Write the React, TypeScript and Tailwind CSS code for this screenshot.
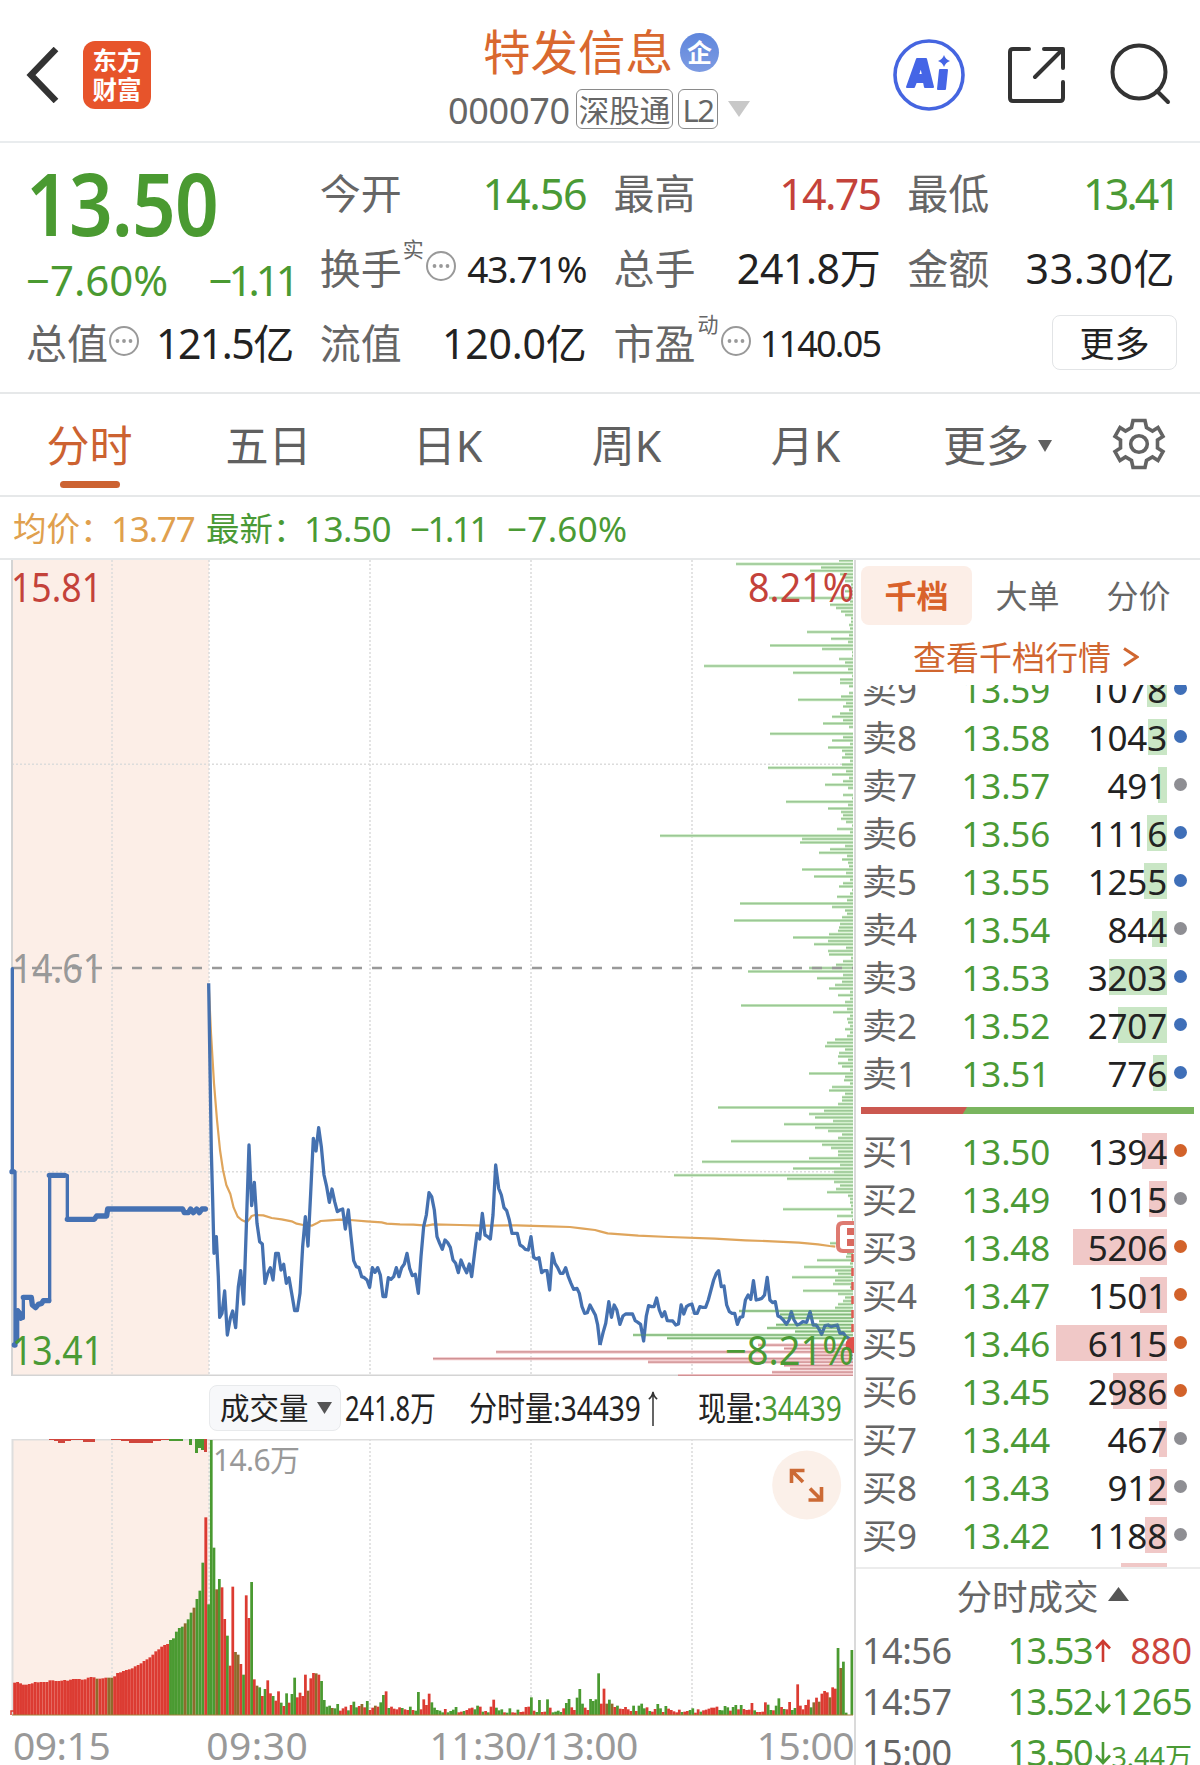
import clsx from 'clsx';

const quotes = [
  { label: '今开', value: '14.56', color: 'text-[#4a9a35] tracking-[-1.2px]' },
  { label: '最高', value: '14.75', color: 'text-[#c4423a] tracking-[-1.8px]' },
  { label: '最低', value: '13.41', color: 'text-[#4a9a35] tracking-[-3px] mr-[-4px]' },
];

const tabs = ['分时', '五日', '日K', '周K', '月K'];

const sells = [
  { name: '卖9', price: '13.59', qty: 1078, dot: 'bg-[#3f6fb8]' },
  { name: '卖8', price: '13.58', qty: 1043, dot: 'bg-[#3f6fb8]' },
  { name: '卖7', price: '13.57', qty: 491, dot: 'bg-[#8e8e93]' },
  { name: '卖6', price: '13.56', qty: 1116, dot: 'bg-[#3f6fb8]' },
  { name: '卖5', price: '13.55', qty: 1255, dot: 'bg-[#3f6fb8]' },
  { name: '卖4', price: '13.54', qty: 844, dot: 'bg-[#8e8e93]' },
  { name: '卖3', price: '13.53', qty: 3203, dot: 'bg-[#3f6fb8]' },
  { name: '卖2', price: '13.52', qty: 2707, dot: 'bg-[#3f6fb8]' },
  { name: '卖1', price: '13.51', qty: 776, dot: 'bg-[#3f6fb8]' },
];

const buys = [
  { name: '买1', price: '13.50', qty: 1394, dot: 'bg-[#d2622a]' },
  { name: '买2', price: '13.49', qty: 1015, dot: 'bg-[#8e8e93]' },
  { name: '买3', price: '13.48', qty: 5206, dot: 'bg-[#d2622a]' },
  { name: '买4', price: '13.47', qty: 1501, dot: 'bg-[#d2622a]' },
  { name: '买5', price: '13.46', qty: 6115, dot: 'bg-[#d2622a]' },
  { name: '买6', price: '13.45', qty: 2986, dot: 'bg-[#d2622a]' },
  { name: '买7', price: '13.44', qty: 467, dot: 'bg-[#8e8e93]' },
  { name: '买8', price: '13.43', qty: 912, dot: 'bg-[#8e8e93]' },
  { name: '买9', price: '13.42', qty: 1188, dot: 'bg-[#8e8e93]' },
];

const MAX_QTY = 6115;

// Order depth per price tick, from the upper limit down. Values are bar lengths in px.
const depthAsk = [
  14, 117, 32, 43, 13, 10, 8, 2, 3, 8, 2, 84, 3, 23, 17, 12, 8, 2, 2, 4, 3, 46, 4, 22, 5, 83, 31, 1, 1, 14,
  8, 149, 5, 60, 1, 13, 13, 4, 0, 4, 12, 55, 7, 10, 4, 13, 21, 10, 30, 4, 0, 83, 10, 21, 3, 25, 11, 8, 11, 3,
  11, 85, 7, 21, 4, 10, 28, 5, 0, 10, 1, 67, 5, 25, 12, 10, 12, 7, 1, 16, 3, 193, 51, 53, 8, 23, 34, 6, 11, 5,
  4, 51, 7, 39, 3, 10, 14, 1, 3, 16, 6, 113, 21, 8, 6, 11, 119, 13, 14, 15, 24, 60, 25, 39, 7, 25, 24, 2, 10, 17,
  44, 105, 10, 36, 11, 18, 24, 3, 15, 3, 8, 112, 6, 20, 3, 6, 5, 3, 8, 3, 6, 18, 26, 28, 8, 14, 15, 5, 15, 11,
  3, 44, 8, 9, 3, 21, 24, 8, 11, 11, 15, 135, 29, 44, 38, 20, 69, 38, 25, 11, 15, 122, 31, 22, 15, 15, 44, 151, 13, 60,
  19, 179, 66, 19, 13, 17, 26, 5, 3, 3, 2, 70, 2, 16, 1, 0, 0, 1, 0, 2, 1, 23, 8, 2, 6, 7, 36, 3, 49, 18,
  15, 61, 18, 20, 3, 50, 15, 8, 10, 15, 18, 114, 73, 71, 34, 77, 86, 58, 220, 186,
];
const depthBid = [95, 69, 357, 39, 420, 205, 69, 63, 81, 175];

const TICK = 3.396;
const depthPath = (list: number[], from: number) =>
  list.map((len, i) => (len ? `M${853 - len} ${(560.6 + (from + i) * TICK).toFixed(1)}H853` : '')).join('');

// Pre-market volume, then minute volume. Letter is the colour, number is the bar top on a 3x grid.
const auctionVol =
  'r908 r906 r910 r914 r914 r912 r910 r906 r907 r906 r906 r906 r901 r901 r903 r903 r902 r900 r902 r899 r897 r897 r897 r899 r898 r893 r891 r892 b896 r896 r895 r893 b893 b893 r889 r879 r877 r873 r870 r868 r865 r859 r855 r850 r843 r838 r832 r824 r814 r808 r800 r795 r792 g780 g775 g755 g744 g740 b730 g718 g698 b683 g657 g632 g548 r412'.split(' ');
const minuteVol = (
  'g673 g180 g503 b628 g597 r622 r717 g767 r857 r620 b816 b824 r852 g884 r646 r714 g606 r898 b917 g922 r948 g927 r901 r940 g948 r962 r934 g968 r978 g940 r968 g942 g893 r952 r938 r948 r884 b932 r895 r879 b880 r884 g903 g960 g980 g977 b984 g985 g972 r992 r985 r980 g991 r975 g965 g982 r978 b972 r982 g963 r990 r983 b977 r980 g967 g945 r934 g984 r980 r986 r988 r982 g984 r988 r990 g980 r990 g992 g936 r988 r958 r975 r941 g967 g983 g990 g992 g997 r987 g997 g993 ' +
  'g989 g981 r997 r995 g993 r990 r985 r983 g988 g977 r980 g995 r993 g997 r980 r959 g983 g991 g988 r997 g998 g985 r997 r998 g989 r996 r995 r981 r980 g952 r992 g996 g960 r996 r995 g958 r983 g997 g995 g992 g996 r985 g969 g957 r982 r990 g953 g927 g971 r983 r990 g957 g963 g958 g880 r971 r926 b971 g959 b971 r981 g977 r986 r987 r981 r988 r993 g977 r993 g977 g971 g985 r982 g993 r995 r987 g972 g985 r996 g978 r986 r990 r994 r997 r989 g996 r995 r993 g990 g985 r998 r988 g995 r991 r989 r986 r983 r983 r980 g990 g991 g978 g982 r992 g981 g975 r988 g975 r987 r990 r989 r969 g991 r996 r996 r995 r967 g974 g990 r991 g977 g955 r981 g987 r988 r966 g990 g984 r913 r977 r988 r975 r959 g982 b967 r953 b965 r941 r933 r937 b952 r922 r926 g804 b864 g845 g998'
).split(' ');

const volColor: Record<string, string> = { r: '#dc3b32', g: '#4a9a31', b: '#8f6a2c' };

const Caret = ({ className, up }: { className: string; up?: boolean }) => (
  <svg viewBox="0 0 20 14" preserveAspectRatio="none" className={className} fill="currentColor">
    <path d={up ? 'M10 0L20 14H0z' : 'M0 0H20L10 14z'} />
  </svg>
);

const Dots = () => (
  <svg viewBox="0 0 30 30" className="h-[30px] w-[30px] shrink-0" fill="none" stroke="#999" strokeWidth="2">
    <circle cx="15" cy="15" r="14" />
    <g fill="#999" stroke="none">
      <circle cx="8.5" cy="15" r="1.9" />
      <circle cx="15" cy="15" r="1.9" />
      <circle cx="21.5" cy="15" r="1.9" />
    </g>
  </svg>
);

function Header() {
  return (
    <header className="relative flex h-[143px] items-center justify-between border-b-2 border-[#e9ecee]">
      <div className="flex items-center pt-[9px] pl-[26px]">
        <svg viewBox="0 0 34 56" className="h-14 w-[34px]" fill="none" stroke="#333" strokeWidth="6.5">
          <path d="M30 2L5 28L30 54" />
        </svg>
        <div className="ml-[23px] flex h-[68px] w-[68px] flex-col items-center justify-center rounded-xl bg-[#e7542b] text-[24.500px] leading-[29px] font-bold text-white">
          <span>东方</span>
          <span>财富</span>
        </div>
      </div>
      <div className="absolute top-5 left-[448px] flex flex-col">
        <div className="flex h-[64px] items-center pl-[35px]">
          <span className="text-[47.500px] leading-none text-[#d9682f]">特发信息</span>
          <span className="ml-[7px] flex h-[39px] w-[39px] items-center justify-center rounded-full bg-linear-to-b from-[#5f86dc] to-[#7d9be2] text-[25px] leading-none font-bold text-white">
            企
          </span>
        </div>
        <div className="flex h-[50px] items-center text-[#666]">
          <span className="w-[128px] pt-[3px] text-[36px] leading-none tracking-[-0.3px]">000070</span>
          <span className="flex h-10 w-[97px] items-center justify-center rounded-md border-[1.5px] border-[#8a8a8a] pt-0.5 text-[30.500px] leading-none">深股通</span>
          <span className="ml-[5px] flex h-10 w-10 items-center justify-center rounded-md border-[1.5px] border-[#8a8a8a] pt-0.5 text-[31px] leading-none tracking-tighter">L2</span>
          <Caret className="ml-[10px] h-[16px] w-[22px] text-[#c8c8c8]" />
        </div>
      </div>
      <div className="flex items-center pt-[9px] pr-[28px]">
        <svg viewBox="0 0 72 72" className="h-[72px] w-[72px]">
          <circle cx="36" cy="36" r="34" fill="none" stroke="#4565e0" strokeWidth="3.6" />
          <path fill="#4565e6" stroke="#4565e6" strokeWidth="2" strokeLinejoin="round" d="M14 48L24 20h9l7 28h-8l-1-5h-8l-2 5zM25 36h5l-2-9zM47 31h7l-2 19h-7z" />
          <path fill="#4565e6" d="M51 16q1.500 4.500 6 6q-4.500 1.500-6 6q-1.500-4.500-6-6q4.500-1.500 6-6z" />
        </svg>
        <svg viewBox="0 0 60 60" className="ml-[42px] h-[60px] w-[60px]" fill="none" stroke="#333" strokeWidth="4" strokeLinecap="round" strokeLinejoin="round">
          <path d="M22 4H6q-3 0-3 3V53q0 3 3 3H53q3 0 3-3V37M37 4H56V23M55 5L28 32" />
        </svg>
        <svg viewBox="0 0 62 62" className="-mt-[2px] ml-[43px] h-[62px] w-[62px]" fill="none" stroke="#333" strokeWidth="4" strokeLinecap="round">
          <circle cx="29" cy="29" r="26.500" />
          <path d="M47 48L58 59" />
        </svg>
      </div>
    </header>
  );
}

function Stats() {
  return (
    <section className="h-[249px] px-[26px] pt-[13px] text-[41px] leading-none text-[#666]">
      <div className="grid grid-cols-4 gap-x-[27px]">
        <div className="row-span-2 flex h-[150px] flex-col text-[#4a9a31]">
          <span className="origin-left scale-x-[0.89] pt-[3px] text-[86px] leading-[88px] font-semibold tracking-[-1px]">13.50</span>
          <div className="mt-[12px] flex justify-between text-[42px]">
            <span>−7.60%</span>
            <span className="-mr-[3px] tracking-[-4px]">−1.11</span>
          </div>
        </div>
        {quotes.map((q) => (
          <div key={q.label} className="flex h-[75px] items-center justify-between">
            <span>{q.label}</span>
            <span className={clsx('text-[43px]', q.color)}>{q.value}</span>
          </div>
        ))}
        <div className="flex h-[75px] items-center">
          <span>换手</span>
          <span className="ml-[1px] self-start pt-[8px] text-[21px]">实</span>
          <span className="ml-[2px] -mt-[6px]"><Dots /></span>
          <span className="ml-auto text-[37px] tracking-[-1px] text-[#222]">43.71%</span>
        </div>
        <div className="flex h-[75px] items-center justify-between">
          <span>总手</span>
          <span className="tracking-[-0.4px] text-[#222]">241.8万</span>
        </div>
        <div className="flex h-[75px] items-center justify-between">
          <span>金额</span>
          <span className="-mr-px tracking-[0.6px] text-[#222]">33.30亿</span>
        </div>
        <div className="flex h-[75px] items-center">
          <span>总值</span>
          <span className="ml-[1px] -mt-[6px]"><Dots /></span>
          <span className="ml-auto tracking-[-1.500px] text-[#222]">121.5亿</span>
        </div>
        <div className="flex h-[75px] items-center justify-between">
          <span>流值</span>
          <span className="tracking-[-0.2px] text-[#222]">120.0亿</span>
        </div>
        <div className="flex h-[75px] items-center">
          <span>市盈</span>
          <span className="ml-[2px] self-start pt-[8px] text-[21px]">动</span>
          <span className="ml-[2px] -mt-[6px]"><Dots /></span>
          <span className="ml-auto text-[36px] tracking-[-1.800px] text-[#222]">1140.05</span>
        </div>
        <div className="flex h-[75px] items-center justify-end">
          <span className="-mr-[3px] -mt-[2px] flex h-[55px] w-[125px] items-center justify-center rounded-lg border-[1.5px] border-[#e2e4e6] pt-0.5 text-[35px] text-[#222]">更多</span>
        </div>
      </div>
    </section>
  );
}

function Tabs() {
  return (
    <nav className="flex h-[105px] border-y-2 border-[#e6e8e9] text-[43px] leading-none text-[#606060]">
      {tabs.map((t, i) => (
        <div key={t} className={clsx('relative flex w-[179px] items-center justify-center pt-0.5', i === 0 && 'text-[#cc6231]')}>
          {t}
          {i === 0 && <span className="absolute bottom-[7px] h-[7px] w-[60px] rounded-full bg-[#cc6231]" />}
        </div>
      ))}
      <div className="flex w-[205px] items-center justify-center pt-0.5">
        更多
        <Caret className="ml-[9px] h-3 w-[14px]" />
      </div>
      <svg viewBox="-27 -27 54 54" className="mt-[23px] ml-[12px] h-[54px] w-[54px]" fill="none" stroke="#636363" strokeWidth="3.600">
        <path d="M-6-23.500H6L7.500-16.500L13.500-12.900L19-16.500L24-7.500L18.500-4V4L24 7.500L19 16.500L13.500 12.900L7.500 16.500L6 23.500H-6L-7.500 16.500L-13.500 12.900L-19 16.500L-24 7.500L-18.500 4V-4L-24-7.500L-19-16.500L-13.500-12.900L-7.500-16.500z" />
        <circle r="8.300" />
      </svg>
    </nav>
  );
}

function PriceChart() {
  const grid = { stroke: '#dcdcdc', strokeWidth: 1.6, strokeDasharray: '2 2' };
  return (
    <svg viewBox="0 560 854 816" className="block h-[816px] w-[854px]" fill="none">
      <rect x="12" y="560" width="197" height="815" fill="#fceee7" />
      <path d="M112 560V1375M209 560V1375M370 560V1375M531 560V1375M692 560V1375M12 764.300H853M12 1171.700H853" {...grid} />
      <path d="M12 560V1375.500H853" stroke="#d4d4d4" strokeWidth="2" />

      <path d={depthPath(depthAsk, 0)} stroke="#c8eac0" strokeWidth="3" />
      <path d={depthPath(depthAsk, 0)} stroke="#9cc796" strokeWidth="1.500" />
      <path d={depthPath(depthBid, 231)} stroke="#efc0c2" strokeWidth="3" />
      <path d={depthPath(depthBid, 231)} stroke="#cf9295" strokeWidth="1.200" />

      <path d="M12 968H853" stroke="#999" strokeWidth="2.600" strokeDasharray="10 10" />

      {/* average price */}
      <g stroke="#dfa55c" strokeWidth="2.200" strokeLinejoin="round">
        <path
          transform="translate(200 940) scale(.33333)"
          vectorEffect="non-scaling-stroke"
          d="M26 132L33 280L42 430L51 540L60 630L69 690L79 735L91 762L101 803L113 830L125 840L140 847L148 838L155 828L165 825L190 826L215 834L245 838L275 844L290 851L310 855L335 857L350 850L362 843L390 841L420 839L450 840L500 844L545 847L560 851L600 853L640 854L680 857L700 853L780 855L850 857L950 856L1050 859L1110 861L1150 866L1185 870L1200 874L1223 880L1315 887L1407 891L1544 896L1636 901L1717 904L1797 908L1854 913L1889 918L1906 920"
        />
      </g>

      {/* call auction */}
      <g transform="translate(0 940) scale(.33333)" stroke="#4571b3" strokeLinejoin="round" strokeLinecap="round">
        <path
          strokeWidth="10"
          d="M37 86V695H45V1215M53 1205V1110L62 1118V1135H70V1072H94L97 1095L107 1103L115 1093L125 1090L130 1083H149V706H202V838H285L290 828H320L323 807H548L553 818H565L572 807L580 818L590 807L598 818L606 807H618"
        />
        <path
          strokeWidth="16"
          d="M36 695H40M43 1215H45M53 1112L62 1135M70 1072H94L97 1095L107 1103L115 1093L125 1090L130 1082H146M148 706H194M202 838H283L290 828H320L323 807H548L553 818H565L572 807L580 818L590 807L598 818L606 807H616"
        />
      </g>

      {/* last price */}
      <g stroke="#4571b0" strokeWidth="3.300" strokeLinejoin="round">
        <path
          transform="translate(200 940) scale(.33333)"
          vectorEffect="non-scaling-stroke"
          d="M26 130L34 635L38 780L42 940L49 890L55 1010L59 1132L66 1120L74 1053L82 1185L91 1135L98 1113L107 1163L115 1040L122 992L131 1092L139 860L147 615L155 797L163 727L171 850L179 905L187 912L195 1030L203 1000L211 983L219 1020L227 940H235L243 990L251 973L259 1030L267 1013L275 1060L284 1112H292L300 1060L308 920L316 830L324 918L332 760L340 595L348 633L356 563L364 620L372 705L380 740L388 787L396 747L404 785L412 815L420 810L428 807L436 867L445 810L453 890L461 962L469 980L477 983L485 1010L493 1013L501 1020L509 1042L517 983L525 997L533 983L541 1005L549 1070H557L565 1013L573 1018L581 1010L589 983L597 1010L605 983L613 972L621 940L629 985L637 1007L646 1003L655 1060L663 950L671 860L679 825L687 758L695 770L703 810L711 890L719 910L727 928L735 900L743 908L751 922L759 960L767 970L775 998L783 960L791 980L800 998L808 972L815 1010L823 945L831 880L839 897L847 820L855 885L863 890L871 897L879 825L887 675L896 745L904 765L912 803L920 812L928 840L936 880H952L960 915L968 920L976 928L985 930L993 890L1001 952L1009 957L1017 953L1025 998L1033 992H1041L1049 1050L1057 940L1065 970L1073 983L1081 1000H1089L1097 983L1105 1010L1113 1030L1121 1048L1131 1045L1138 1060L1146 1100L1154 1120L1162 1118L1170 1095L1178 1110L1186 1125L1193 1155L1200 1215"
        />
        <path
          transform="translate(600 940) scale(.3827 .33333)"
          vectorEffect="non-scaling-stroke"
          d="M0 1215L8 1178L15 1150L23 1085L30 1132L37 1095L44 1110L52 1153L60 1128L67 1122H85L92 1142L99 1147L106 1153L114 1203L121 1128L127 1097L135 1100H141L148 1074L155 1110L162 1130L169 1115L176 1142L190 1143L198 1155L205 1152L212 1095L219 1122L226 1100L232 1095L240 1092L247 1120H254L261 1100L268 1102H276L283 1080L290 1050L297 1020L304 1000L310 992L317 1040L324 1038L331 1095L338 1115L345 1120H352L359 1153L366 1132L373 1130L380 1080L387 1065L394 1078L401 1022L408 1080L415 1078L423 1075L430 1065L437 1012L444 1080L451 1088L458 1085L465 1128L472 1132L479 1140L487 1153L494 1140L500 1115L507 1140L515 1155L522 1152L530 1145L540 1147L549 1115L557 1155H565L571 1165L579 1183L588 1157L596 1155L604 1160L612 1157L620 1155L627 1180L635 1178L643 1190L650 1195L657 1203"
        />
      </g>
      <path d={depthPath(depthAsk.slice(221), 221)} stroke="#5aa050" strokeOpacity=".35" strokeWidth="1.500" />

      {/* marker badge cut off by the chart edge */}
      <path d="M854 1223H843q-5 0-5 5v18q0 5 5 5h11" fill="#fff" stroke="#de7a70" strokeWidth="4" />
      <path d="M847 1228h7v7h-7zM847 1239h7v7h-7z" fill="#d9695f" />
      <path d="M852.500 1254V1345" stroke="#de5a50" strokeWidth="2.500" strokeDasharray="8 6" />
      <path d="M853.500 1338a7 7 0 0 0 0 14z" fill="#e0504a" stroke="#e0504a" strokeWidth="2" />

      <g className="font-['Noto_Sans','Noto_Sans_CJK_SC',sans-serif] text-[39.500px]">
        <text x="11" y="602" textLength="91" lengthAdjust="spacingAndGlyphs" fill="#c4423a">15.81</text>
        <text x="12" y="983" textLength="91" lengthAdjust="spacingAndGlyphs" fill="#999">14.61</text>
        <text x="12" y="1365" textLength="91" lengthAdjust="spacingAndGlyphs" fill="#4a9a35">13.41</text>
        <text x="748" y="602" textLength="106" lengthAdjust="spacingAndGlyphs" fill="#c4423a">8.21%</text>
        <text x="725" y="1365" textLength="129" lengthAdjust="spacingAndGlyphs" fill="#4a9a35">−8.21%</text>
      </g>
    </svg>
  );
}

function VolumeBar() {
  return (
    <div className="flex h-[63px] items-center text-[34px] leading-none whitespace-nowrap text-[#222]">
      <div className="ml-[209px] flex h-[46px] w-[132px] shrink-0 items-center rounded-lg border border-[#e8eaec] bg-[#f7f8fa] pl-[10px]">
        <span className="w-[90px] text-[29.500px]">成交量</span>
        <Caret className="ml-[7px] h-[12px] w-[15px] text-[#555]" />
      </div>
      <span className="ml-1 w-[124px] shrink-0 origin-left scale-x-[0.75]">241.8万</span>
      <span className="w-[179px] shrink-0 origin-left scale-x-[0.825]">分时量:34439</span>
      <svg viewBox="0 0 10 36" className="h-9 w-[10px] shrink-0" fill="none" stroke="#333" strokeWidth="1.500">
        <path d="M5 36V2M0.800 9Q4 7 5 2Q6 7 9.200 9" />
      </svg>
      <span className="ml-[40px] shrink-0 origin-left scale-x-[0.825]">
        现量:<span className="text-[#4a9a35]">34439</span>
      </span>
    </div>
  );
}

function VolumeChart() {
  return (
    <svg viewBox="0 1439 854 277" className="block h-[277px] w-[854px]" fill="none">
      <rect x="12" y="1439" width="197" height="276" fill="#fceee7" />
      <path d="M112 1439V1715M209 1439V1715M370 1439V1715M531 1439V1715M692 1439V1715" stroke="#dcdcdc" strokeWidth="1.600" strokeDasharray="2 2" />
      <path d="M12.500 1715V1439.500H853" stroke="#dedede" strokeWidth="2" />
      {auctionVol.map((v, i) => (
        <rect key={i} x={13.2 + i * 2.941} y={1380 + Number(v.slice(1)) / 3} width="2.9" height={(1005 - Number(v.slice(1))) / 3} fill={volColor[v[0]]} />
      ))}
      <path d="M11 1715v-4h3" stroke="#dc3b32" strokeWidth="1.500" />
      {minuteVol.map((v, i) => (
        <rect key={i} x={207.2 + i * 2.69} y={1380 + Number(v.slice(1)) / 3} width="2.75" height={(1005 - Number(v.slice(1))) / 3} fill={volColor[v[0]]} />
      ))}
      <rect x="850.500" y="1650" width="2.700" height="65" fill="#4a9a31" />
      <path d="M12 1715H853" stroke="#a08038" strokeWidth="1" />

      {/* unmatched volume hanging from the top */}
      <path fill="#d0453c" d="M12 1439h37v1h5v1h4v2h7v-2h6v-1h12v2h12v-3h16v1h10v1h8v2h24v-2h8v-1h8v-1zM204 1439h3v13h-3z" />
      <path fill="#4a9a31" d="M169 1439h14v2h-14zM189 1439h3v6h-3zM195 1439h3v14h-3zM198 1439h3v9h-3zM201 1439h3v11h-3z" />

      <text x="213" y="1471" textLength="87" fill="#999" className="font-['Noto_Sans','Noto_Sans_CJK_SC',sans-serif] text-[30px]">
        14.6万
      </text>
      <circle cx="806.700" cy="1485" r="34.500" fill="#fbf0e9" />
      <path d="M791.500 1483V1470.500H804.500M792 1471L803 1482M821.500 1487V1500H808.500M821 1499.500L810 1488.500" stroke="#cc6a35" strokeWidth="3.600" />
    </svg>
  );
}

function BookRow({ name, price, qty, dot, sell }: { name: string; price: string; qty: number; dot: string; sell?: boolean }) {
  return (
    <div className="flex h-12 shrink-0 items-center pl-[6px] text-[35px] leading-none">
      <span className="w-[62px] text-[#666]">{name}</span>
      <span className="w-[126px] text-right tracking-[-0.2px] text-[#4a9a35]">{price}</span>
      <div className="relative ml-[6px] flex h-9 w-[111px] items-center justify-end">
        <span
          className={clsx('absolute inset-y-0 right-0', sell ? 'bg-[#c9e6c5]' : 'bg-[#f0c8c7]')}
          style={{ width: `${(qty / MAX_QTY) * 100}%` }}
        />
        <span className="relative tracking-[-0.2px] text-[#222]">{qty}</span>
      </div>
      <span className={clsx('mb-[2px] ml-[7px] h-[13px] w-[13px] rounded-full', dot)} />
    </div>
  );
}

function TradeArrow({ down }: { down?: boolean }) {
  return (
    <svg viewBox="0 0 16 24" className={clsx('h-6 w-4 shrink-0', down ? 'text-[#4a9a35]' : 'text-[#cc3a30]')} fill="none" stroke="currentColor" strokeWidth="2.600">
      <path d={down ? 'M8 1V22M1 14.500L8 22L15 14.500' : 'M8 23V2M1 9.500L8 2L15 9.500'} />
    </svg>
  );
}

function OrderBook() {
  return (
    <aside className="flex h-[1205px] w-[346px] flex-col overflow-hidden border-l-2 border-[#dadada]">
      <div className="flex shrink-0 pt-[6px] pl-[5px] text-[32px] leading-none text-[#666]">
        <span className="flex h-[59px] w-[111px] items-center justify-center rounded-lg bg-[#fceee7] pt-px font-bold text-[#d9622b]">千档</span>
        <span className="flex w-[111px] items-center justify-center pt-px">大单</span>
        <span className="flex w-[111px] items-center justify-center pt-px">分价</span>
      </div>
      <div className="flex h-[60px] shrink-0 items-center justify-center gap-3 pt-1 pr-1 text-[33px] leading-none text-[#d0662f]">
        查看千档行情
        <svg viewBox="0 0 16 20" className="h-5 w-4" fill="none" stroke="currentColor" strokeWidth="3">
          <path d="M1 1.500L14 10L1 18.500" />
        </svg>
      </div>
      <div className="flex h-[882px] shrink-0 flex-col overflow-hidden">
        <div className="-mt-5 flex shrink-0 flex-col">
          {sells.map((s) => (
            <BookRow key={s.name} {...s} sell />
          ))}
        </div>
        <div className="mt-[10px] mb-[13px] ml-[5px] flex h-[7px] w-[333px] shrink-0 bg-[#7ab55f]">
          <span className="h-full w-[106px] bg-[#cb5850] [clip-path:polygon(0_0,100%_0,96%_100%,0_100%)]" />
        </div>
        {buys.map((b) => (
          <BookRow key={b.name} {...b} />
        ))}
        <div className="mt-1 ml-[265px] h-3 w-[46px] shrink-0 bg-[#f0c8c7]" />
      </div>
      <div className="flex h-[58px] shrink-0 items-center justify-center gap-[9px] border-t-2 border-[#ececec] pl-[29px] text-[35.500px] leading-none text-[#666]">
        分时成交
        <Caret up className="-mt-[6px] h-[14px] w-[21px] text-[#555]" />
      </div>
      {[
        { time: '14:56', price: '13.53', qty: '880' },
        { time: '14:57', price: '13.52', qty: '1265', down: true },
        { time: '15:00', price: '13.50', qty: '3.44万', down: true },
      ].map((t) => (
        <div key={t.time} className="flex h-[51px] shrink-0 items-center pr-2 pl-[6px] text-[36px] leading-none">
          <span className="w-[103px] tracking-[-0.5px] text-[#666]">{t.time}</span>
          <span className="w-[130px] pr-[3px] text-right tracking-[-1.500px] text-[#4a9a35]">{t.price}</span>
          <TradeArrow down={t.down} />
          <span
            className={clsx(
              'flex-1 text-right whitespace-nowrap',
              t.down ? 'text-[#4a9a35]' : 'text-[#cc453c]',
              t.qty.length === 4 && 'tracking-[-0.5px]',
              t.qty.length > 4 && 'pt-2 text-[27px]',
            )}
          >
            {t.qty}
          </span>
        </div>
      ))}
    </aside>
  );
}

export default function App() {
  return (
    <main className="h-[1765px] w-[1200px] overflow-hidden bg-white font-['Noto_Sans','Noto_Sans_CJK_SC',sans-serif]">
      <Header />
      <Stats />
      <Tabs />
      <div className="flex h-[63px] items-center border-b-2 border-[#e6e8e9] pt-0.5 pl-[13px] text-[35px] leading-none whitespace-nowrap text-[#4a9a35]">
        <span className="w-[98px] text-[33.500px] text-[#e0a04e]">均价：</span>
        <span className="w-[95px] tracking-[-1.200px] text-[#e0a04e]">13.77</span>
        <span className="w-[98px] text-[33.500px]">最新：</span>
        <span className="w-[106px] tracking-[-0.5px]">13.50</span>
        <span className="w-[97px] tracking-[-2.500px]">−1.11</span>
        <span className="tracking-[0.3px]">−7.60%</span>
      </div>
      <div className="flex">
        <div className="flex w-[854px] flex-col">
          <PriceChart />
          <VolumeBar />
          <VolumeChart />
          <div className="flex h-[49px] items-center justify-between pt-[7px] pl-[13px] text-[39px] leading-none text-[#999]">
            <span className="tracking-[-0.5px]">09:15</span>
            <span className="mr-auto ml-[96px] tracking-[0.5px]">09:30</span>
            <span className="mr-[119px] tracking-[-0.500px]">11:30/13:00</span>
            <span className="tracking-[-0.5px]">15:00</span>
          </div>
        </div>
        <OrderBook />
      </div>
    </main>
  );
}
